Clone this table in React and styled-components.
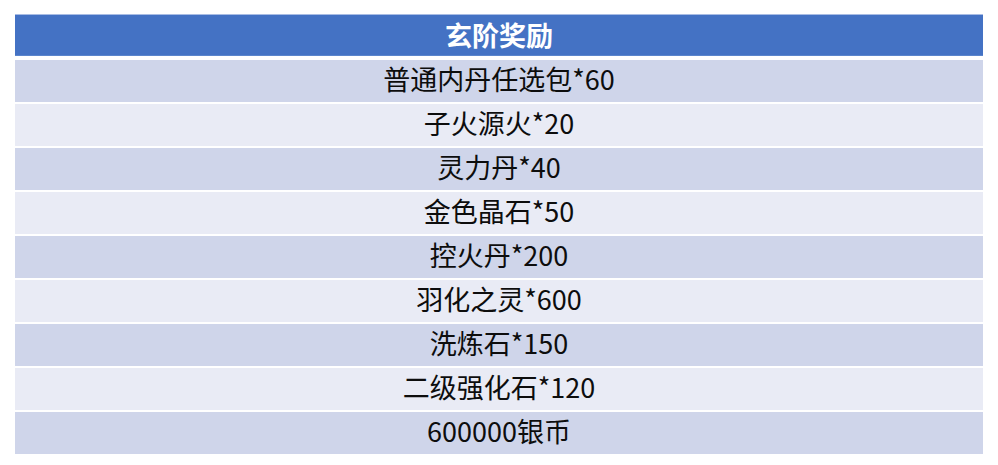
import { createGlobalStyle } from "styled-components";
import styled from "styled-components";

const GlobalStyle = createGlobalStyle`
  html, body {
    margin: 0;
    padding: 0;
    background: #ffffff;
  }
  body {
    font-family: "Noto Sans CJK SC", "Noto Sans", sans-serif;
  }
`;

const Table = styled.div`
  width: 968px;
  margin: 14px 0 0 15px;
  display: flex;
  flex-direction: column;
  gap: 2px;
`;

const Header = styled.div`
  height: 42px;
  margin-bottom: 2px;
  box-sizing: border-box;
  padding-bottom: 2px;
  display: flex;
  align-items: center;
  justify-content: center;
  background-color: #4472c4;
  border-top: 1px solid #a8bce4;
  border-bottom: 1px solid #5b85cc;
  color: #ffffff;
  font-size: 27px;
  line-height: 1;
  font-weight: bold;
`;

const Row = styled.div`
  height: 42px;
  box-sizing: border-box;
  padding-bottom: 5px;
  display: flex;
  align-items: center;
  justify-content: center;
  background-color: ${(p) => (p.odd ? "#cfd5ea" : "#e9ebf5")};
  color: #0d0d0d;
  font-size: 27px;
  line-height: 1;
`;

const rewards = [
  "普通内丹任选包*60",
  "子火源火*20",
  "灵力丹*40",
  "金色晶石*50",
  "控火丹*200",
  "羽化之灵*600",
  "洗炼石*150",
  "二级强化石*120",
  "600000银币",
];

export default function App() {
  return (
    <>
      <GlobalStyle />
      <Table>
        <Header>玄阶奖励</Header>
        {rewards.map((r, i) => (
          <Row key={r} odd={i % 2 === 0}>
            {r}
          </Row>
        ))}
      </Table>
    </>
  );
}
